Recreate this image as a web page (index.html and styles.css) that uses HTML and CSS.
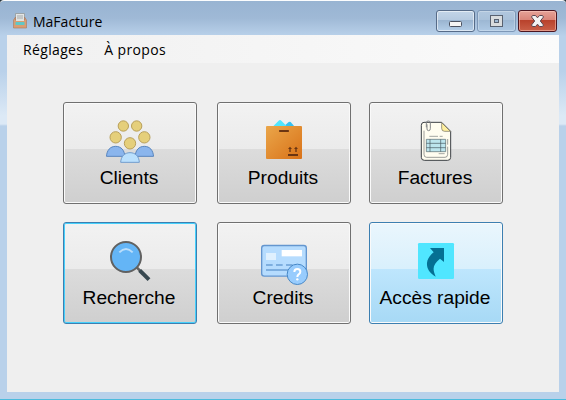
FILE: index.html
```html
<!DOCTYPE html>
<html lang="fr">
<head>
<meta charset="utf-8">
<title>MaFacture</title>
<link rel="stylesheet" href="styles.css">
</head>
<body>
<div class="window">
  <header class="titlebar">
    <svg class="app-icon" width="14" height="16" viewBox="0 0 14 16">
      <path d="M2.500 .5h9v7h-9z" fill="#e4e6e6" stroke="#93999b" stroke-width=".8"/>
      <path d="M4 3h6M4 5h6" stroke="#a4a9aa" stroke-width="1"/>
      <path d="M.5 7l2-3v3h9V4l2 3v8H.5z" fill="#d99d72" stroke="#a9795d" stroke-width=".6"/>
      <path d="M3 6h8v2H3z" fill="#dfe1df"/>
      <path d="M2.500 9h9v3h-9z" fill="#60c7c7"/>
    </svg>
    <h1 class="title">MaFacture</h1>
    <div class="controls">
      <button class="ctl ctl-min" aria-label="Réduire"><svg width="39" height="22" viewBox="0 0 39 22"><rect x="13.500" y="11.500" width="12" height="5" rx="1" fill="#f4f4f4" stroke="#4b5160"/></svg></button>
      <button class="ctl ctl-max" aria-label="Agrandir"><svg width="39" height="22" viewBox="0 0 39 22"><rect x="13.500" y="5.500" width="12" height="11" fill="#d9dcde" stroke="#596271"/><rect x="17.500" y="9.500" width="4" height="3" fill="#9fb9d5" stroke="#596271"/></svg></button>
      <button class="ctl ctl-close" aria-label="Fermer"><svg width="39" height="22" viewBox="0 0 39 22"><path d="M14.500 5.500h3l2 2.300 2-2.300h3l1 1.500-3.200 4 3.200 4-1 1.500h-3l-2-2.300-2 2.300h-3l-1-1.500 3.200-4-3.200-4z" fill="#f3f3f3" stroke="#5b4650"/></svg></button>
    </div>
  </header>
  <main class="client">
    <nav class="menu"><span class="menu-item">Réglages</span><span class="menu-item about">À propos</span></nav>
    <div class="tiles">
      <button class="tile">
        <svg viewBox="12 15 396 183" width="132" height="61">
          <g fill="#e5cf7b" stroke="#b9a05a" stroke-width="3">
            <circle cx="190" cy="84" r="15.500"/><circle cx="230" cy="84" r="15.500"/>
            <circle cx="167" cy="118" r="17"/><circle cx="253" cy="118" r="17"/><circle cx="210" cy="136" r="17"/>
          </g>
          <path d="M139.500 175c1-18 11-30 27.500-30s26.500 12 27.500 30zM225.500 175c1-18 11-30 27.500-30s26.500 12 27.500 30z" fill="#8ab5ed" stroke="#5885bd" stroke-width="3"/>
          <path d="M182 193c1-18 12-29 28-29s27 11 28 29z" fill="#bae0fd" stroke="#719dce" stroke-width="3"/>
        </svg>
        <span class="label">Clients</span>
      </button>
      <button class="tile">
        <svg viewBox="12 15 396 183" width="132" height="61">
          <defs><linearGradient id="box" x1="0" y1="0" x2="1" y2="1"><stop stop-color="#eaa64a"/><stop offset="1" stop-color="#d97218"/></linearGradient></defs>
          <path d="M208 86l16-14q3-2 6 0l12 14z" fill="#35c1f1"/>
          <path d="M176 86l18-18q4-4 8 0l18 18z" fill="#50e6ff"/>
          <rect x="156" y="84" width="108" height="99" rx="3" fill="url(#box)"/>
          <rect x="195" y="96" width="30" height="6" rx="2" fill="#6b3512"/>
          <path d="M222 168h30v6h-30zM222 153l6-7 6 7h-4v9h-4v-9zM240 153l6-7 6 7h-4v9h-4v-9z" fill="#6b3512"/>
        </svg>
        <span class="label">Produits</span>
      </button>
      <button class="tile">
        <svg viewBox="12 15 396 183" width="132" height="61">
          <path d="M174 73h53l27 27v78q0 9-9 9h-70q-9 0-9-9V82q0-9 8-9z" fill="#fffdf0" stroke="#3d4145" stroke-width="3"/>
          <path d="M174 98v71q0 9 8 9h55q8 0 8-9v-23M245 140v-17" fill="none" stroke="#6c6f70" stroke-width="2"/>
          <path d="M227 74v17q0 9 9 9h17z" fill="#fff0a0" stroke="#6e6a57" stroke-width="2"/>
          <path d="M181 88V74q0-5 6-5t6 5v18q0 6-5 6t-5-5V79" fill="none" stroke="#858789" stroke-width="3"/>
          <path d="M190 115h26M221 115h9M218 167h18" stroke="#777b7c" stroke-width="2"/>
          <path d="M181 124h58v37h-58z" fill="#bce5ed" stroke="#52656b" stroke-width="2"/>
          <path d="M181 136h58M181 149h58M192 124v37M224 124v37" stroke="#46575d" stroke-width="2"/>
        </svg>
        <span class="label">Factures</span>
      </button>
      <button class="tile focused">
        <svg viewBox="12 15 396 183" width="132" height="61">
          <path d="M228 146l20 20" stroke="#616161" stroke-width="8"/>
          <path d="M239 157l28 28" stroke="#37474f" stroke-width="12"/>
          <circle cx="198" cy="117" r="45" fill="#64b5f6" stroke="#616161" stroke-width="6"/>
          <path d="M178 103q20-20 40 0" fill="none" stroke="#bbdefb" stroke-width="6"/>
        </svg>
        <span class="label">Recherche</span>
      </button>
      <button class="tile">
        <svg viewBox="12 15 396 183" width="132" height="61">
          <rect x="143" y="82.500" width="134" height="92" rx="8" fill="#b6dcfe" stroke="#6496cf" stroke-width="4"/>
          <path d="M156 105h30v21h-30z" fill="#dff0fe"/><path d="M203 96h61v19h-61z" fill="#fff"/>
          <path d="M156 141h20M186 141h20M216 141h20M156 156h66" stroke="#6b9ed5" stroke-width="4"/>
          <circle cx="250" cy="169" r="30.500" fill="#98ccfd" stroke="#4788c7" stroke-width="3"/>
          <path d="M241 162q0-9 9-9t9 8q0 5-5 8-4 3-4 8" fill="none" stroke="#fff" stroke-width="6"/>
          <circle cx="250" cy="184" r="3.500" fill="#fff"/>
        </svg>
        <span class="label">Credits</span>
      </button>
      <button class="tile hovered">
        <svg viewBox="12 15 396 183" width="132" height="61">
          <rect x="156" y="75" width="108" height="108" rx="4" fill="#50e6ff"/>
          <path d="M192 90h42v42l-12-10c-19 16-25 27-13 54-20-12-27-26-26-41 1-13 9-23 20-32z" fill="#057093"/>
        </svg>
        <span class="label">Accès rapide</span>
      </button>
    </div>
  </main>
</div>
</body>
</html>
```

FILE: styles.css
```css
* { box-sizing: border-box; }
body { margin: 0; background: #24343e; }
button { font: inherit; color: inherit; padding: 0; margin: 0; }
svg { display: block; overflow: visible; }
.window {
  width: 566px;
  height: 400px;
  padding: 0 7px 7px;
  border-top: 1px solid #fbfdfe;
  border-bottom: 1px solid #4dbbdc;
  border-radius: 4px 4px 0 0;
  background: linear-gradient(#98b4d2 0, #9fb9d6 17px, #b9d1ea 35px, #b9d1ea 70px, #dce9f6 115px, #dce9f6 123px, #b9d1ea 125px);
}
.titlebar { height: 34px; display: flex; align-items: flex-start; padding-left: 6px; }
.app-icon { margin-top: 12px; }
.title {
  margin: 11px 0 0 6px;
  font: 400 14px/20px "Open Sans", "Noto Sans", sans-serif;
  color: #000;
}
.controls { display: flex; gap: 2px; margin: 9px 2px 0 auto; }
.ctl {
  width: 39px;
  height: 22px;
  border: 1px solid #566b88;
  border-radius: 3px;
  box-shadow: inset 0 0 0 1px rgba(255, 255, 255, .55);
  background: linear-gradient(#c3d5e8 0, #b5cae0 9px, #99b3cf 9px, #b4cee8 100%);
}
.ctl svg { margin: -1px; }
.ctl-max { border-color: #7d97b7; background: linear-gradient(#b1c7de 0, #a9c1da 9px, #9cb7d3 9px, #aec9e4 100%); box-shadow: inset 0 0 0 1px rgba(255, 255, 255, .25); }
.ctl-close { border-color: #4b1520; background: linear-gradient(#e5a298 0, #d98478 9px, #b8412b 9px, #ca6048 100%); box-shadow: inset 0 0 0 1px rgba(255, 210, 200, .5); }
.client { height: 357px; background: #efefef; }
.menu {
  display: flex;
  height: 28px;
  padding-left: 16px;
  background: linear-gradient(90deg, #f0f0f0, #fbfbfb);
  font: 14px/29px "Open Sans", "Noto Sans", sans-serif;
  letter-spacing: 0.35px;
  color: #000;
}
.about { margin-left: 21px; }
.tiles {
  display: grid;
  grid-template-columns: 154px 152px 134px;
  grid-template-rows: 102px 102px;
  row-gap: 18px;
  padding: 39px 0 0 56px;
}
.tile {
  display: flex;
  flex-direction: column;
  align-items: center;
  width: 134px;
  height: 102px;
  border: 1px solid #707070;
  border-radius: 3px;
  box-shadow: inset 0 0 0 1px #fafafa;
  background: linear-gradient(#f2f2f2 0, #ebebeb 46px, #dcdcdc 46px, #cfcfcf 100%);
  color: #000;
}
.focused { border-color: #3c7fb1; box-shadow: inset 0 0 0 1px #46d0fb; }
.hovered { border-color: #3c7fb1; background: linear-gradient(#eaf6fd 0, #d9f0fc 46px, #bee6fd 46px, #a7d9f5 100%); }
.label { font: 19.2px/22px "Liberation Sans", Arial, sans-serif; white-space: nowrap; margin: 3px 2px 0 0; }
```
